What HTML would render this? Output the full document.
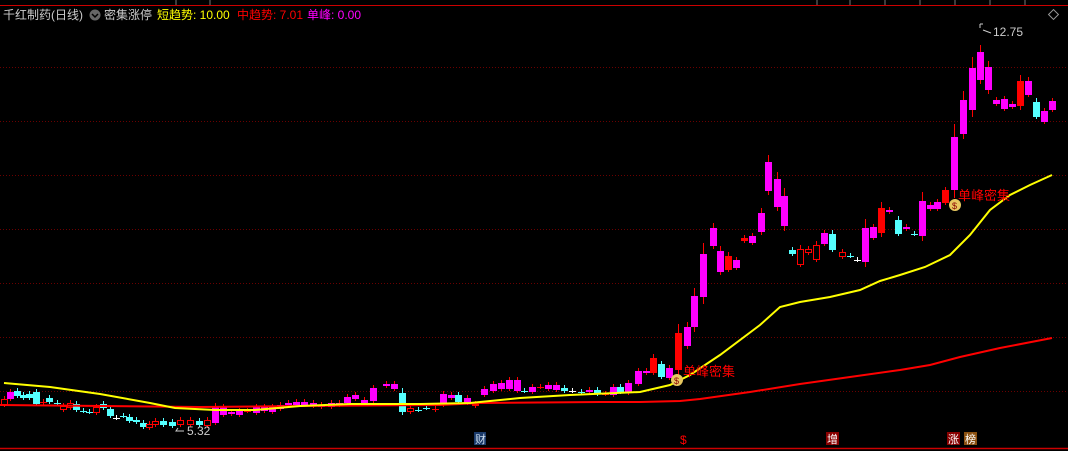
<!DOCTYPE html><html><head><meta charset="utf-8"><style>
body{margin:0;background:#000;width:1068px;height:451px;overflow:hidden;font-family:"Liberation Sans","Noto Sans CJK SC",sans-serif}
</style></head><body>
<svg id="s" width="1068" height="451" xmlns="http://www.w3.org/2000/svg" style="position:absolute;left:0;top:0">
<line x1="0" y1="5.5" x2="1068" y2="5.5" stroke="#c00" stroke-width="1"/>
<g stroke="#777" stroke-width="1"><line x1="176" y1="0" x2="176" y2="5"/><line x1="210" y1="0" x2="210" y2="5"/><line x1="817" y1="0" x2="817" y2="5"/><line x1="850" y1="0" x2="850" y2="5"/><line x1="885" y1="0" x2="885" y2="5"/><line x1="920" y1="0" x2="920" y2="5"/><line x1="955" y1="0" x2="955" y2="5"/><line x1="990" y1="0" x2="990" y2="5"/><line x1="1025" y1="0" x2="1025" y2="5"/></g>
<g stroke="#6a0000" stroke-width="1" stroke-dasharray="1,2">
<line x1="0" y1="67.5" x2="1068" y2="67.5"/><line x1="0" y1="121.5" x2="1068" y2="121.5"/><line x1="0" y1="175.5" x2="1068" y2="175.5"/><line x1="0" y1="229.5" x2="1068" y2="229.5"/><line x1="0" y1="283.5" x2="1068" y2="283.5"/><line x1="0" y1="337.5" x2="1068" y2="337.5"/><line x1="0" y1="391.5" x2="1068" y2="391.5"/>
</g>
<line x1="0" y1="448.5" x2="1068" y2="448.5" stroke="#c00" stroke-width="1.5"/>
<g id="c"></g>
<polyline fill="none" stroke="#f00" stroke-width="2" points="0,405 200,407 300,406 440,405 480,403 600,402 640,402 680,401 700,399 750,392 800,384 850,377 900,370 930,365 960,357 1000,348 1052,338"/>
<polyline fill="none" stroke="#ff0" stroke-width="2" points="4,383 50,387 100,394 150,403 175,408 215,410 255,410 300,406 350,404 420,404 470,403 520,398 570,395 640,392 670,385 690,375 720,355 760,325 780,307 800,302 830,297 860,290 880,281 900,275 925,267 950,255 970,235 990,210 1010,195 1030,185 1052,175"/>
<g font-size="13" fill="#f00"><text x="683" y="376">单峰密集</text><text x="958" y="200">单峰密集</text></g>
<g><circle cx="677" cy="380" r="6" fill="#e8c860"/><text x="674" y="384" font-size="9" fill="#800">$</text><circle cx="955" cy="205" r="6" fill="#e8c860"/><text x="952" y="209" font-size="9" fill="#800">$</text></g>
<text x="993" y="36" font-size="12" fill="#ccc">12.75</text><path d="M980 28 V24 M980 24 l3 0 M983 30 l8 3" stroke="#ccc" fill="none"/>
<text x="187" y="435" font-size="12" fill="#ccc">5.32</text><path d="M184 431 h-8 l2 -3" stroke="#ccc" fill="none"/>
<rect x="474" y="432" width="12" height="13" fill="#1a3a6a"/><text x="475" y="443" font-size="11" fill="#cde">财</text>
<text x="680" y="444" font-size="12" fill="#f00">$</text>
<rect x="826" y="432" width="13" height="13" fill="#800"/><text x="827" y="443" font-size="11" fill="#fff">增</text>
<rect x="947" y="432" width="13" height="13" fill="#800"/><text x="948" y="443" font-size="11" fill="#fff">涨</text>
<rect x="964" y="432" width="13" height="13" fill="#8a5010"/><text x="965" y="443" font-size="11" fill="#fff">榜</text>
<rect x="1050" y="11" width="7" height="7" transform="rotate(45 1053.5 14.5)" fill="none" stroke="#999"/>
<text x="3" y="19" font-size="12" fill="#ccc">千红制药(日线)</text>
<circle cx="95" cy="15" r="5.5" fill="#666"/><path d="M92 14 l3 3 l3 -3" stroke="#000" fill="none" stroke-width="1.5"/>
<text x="104" y="19" font-size="12" fill="#ccc">密集涨停</text>
<text x="157" y="19" font-size="12" fill="#ff0">短趋势: 10.00</text>
<text x="237" y="19" font-size="12" fill="#f00">中趋势: 7.01</text>
<text x="307" y="19" font-size="12" fill="#f0f">单峰: 0.00</text>
</svg>
<script>
var M="#f0f",R="#f00",C="#5ff",W="#fff";
var d=[[4,399,405,R,1],[10,392,399,M],[17,391,396,C],[23,395,398,C],[29,394,398,C],[36,392,404,C],[43,402,403,R],[49,398,402,C],[57,403,403,C],[63,406,410,R,1],[70,403,408,R,1],[76,404,410,C],[83,411,411,C],[89,412,412,C],[96,407,413,R,1],[103,404,408,C],[110,409,416,C],[116,418,418,W],[123,416,416,C],[129,417,421,C],[136,420,422,C],[143,423,427,C],[149,424,428,R,1],[155,421,425,R,1],[163,421,425,C],[172,422,426,C],[180,420,425,R,1],[190,420,425,R,1],[199,421,425,C],[207,420,426,R,1],[215,407,423,M],[223,407,415,M],[231,412,414,M],[239,411,415,M],[247,411,411,R],[256,407,413,M],[264,407,411,M],[272,407,412,M],[280,405,409,M],[288,403,405,M],[296,402,405,M],[304,402,405,M],[313,403,406,M],[321,405,407,M],[331,403,407,M],[339,403,405,M],[347,397,403,M],[355,395,399,M],[364,400,403,M],[373,388,401,M],[386,384,386,M],[394,384,389,M],[402,393,412,C],[410,408,412,R,1],[418,410,410,C],[426,408,408,C],[435,409,410,R],[443,394,405,M],[451,395,398,M],[458,395,402,C],[467,398,403,M],[475,404,406,R,1],[484,389,395,M],[493,384,391,M],[501,383,389,M],[509,380,389,M],[517,380,391,M],[524,391,391,C],[532,387,392,M],[540,387,387,R],[548,385,389,M],[556,385,390,M],[564,388,391,C],[572,391,391,W],[581,392,392,C],[589,390,392,M],[597,390,394,C],[605,394,394,R],[613,387,395,M],[620,387,392,C],[628,383,393,M],[638,371,384,M],[646,371,373,M],[653,358,373,R],[661,364,377,C],[669,368,378,M],[678,333,370,R],[687,327,346,M],[694,296,327,M],[703,254,297,M],[713,228,246,M],[720,251,272,M],[728,256,270,R],[736,260,268,M],[744,238,241,R],[752,236,243,M],[761,213,232,M],[768,162,191,M],[777,179,207,M],[784,196,226,M],[792,250,254,C],[800,249,265,R,1],[808,249,253,R,1],[816,245,260,R,1],[824,233,244,M],[832,234,250,C],[842,252,257,R,1],[850,256,256,C],[857,260,260,W],[865,228,262,M],[873,227,238,M],[881,208,233,R],[889,210,212,M],[898,220,234,C],[906,227,229,M],[914,234,234,C],[922,201,236,M],[930,205,209,M],[937,202,209,M],[945,190,203,R],[954,137,190,M],[963,100,134,M],[972,68,110,M],[980,52,80,M],[988,67,90,M],[996,100,104,M],[1004,99,109,M],[1012,104,107,M],[1020,81,106,R],[1028,81,95,M],[1036,102,117,C],[1044,111,122,M],[1052,101,110,M]];
var g=document.getElementById("c"),h="";
d.forEach(function(a){var x=a[0],t=a[1],b=a[2],c=a[3],w=Math.max(3,Math.round((b-t)*0.25));
var wt=t-w,wb=b+Math.round(w*0.6);
h+='<line x1="'+(x+0.5)+'" y1="'+wt+'" x2="'+(x+0.5)+'" y2="'+wb+'" stroke="'+(c==M?R:c)+'"/>';
if(b-t<1)h+='<rect x="'+(x-3)+'" y="'+t+'" width="7" height="1" fill="'+c+'"/>';
else if(a[4])h+='<rect x="'+(x-2.5)+'" y="'+(t+0.5)+'" width="6" height="'+(b-t-1)+'" fill="#000" stroke="'+c+'"/>';
else h+='<rect x="'+(x-3)+'" y="'+t+'" width="7" height="'+(b-t)+'" fill="'+c+'"/>';});
g.innerHTML=h;
</script>
</body></html>
